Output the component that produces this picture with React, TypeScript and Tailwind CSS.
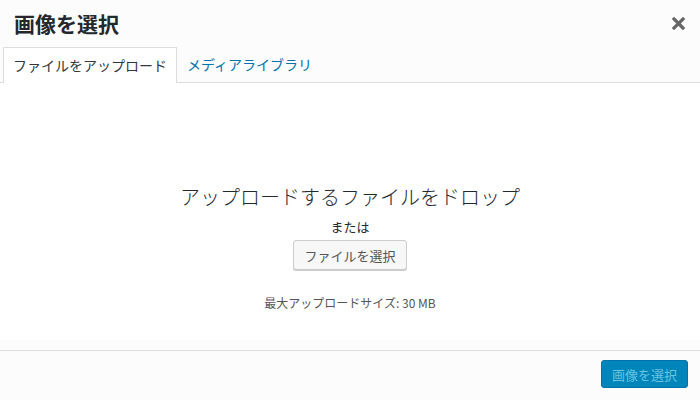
import React from "react";

export default function App() {
  const font = { fontFamily: '"Noto Sans CJK JP", "Noto Sans", sans-serif' };
  return (
    <div className="w-[700px] h-[400px] flex flex-col bg-[#fcfcfc] text-[#23282d] overflow-hidden" style={font}>
      <div className="flex flex-col bg-[#fcfcfc] border-b border-[#dddddd]">
        <div className="h-[47px] flex items-center justify-between pl-[14px] pr-[15px]">
          <h1 className="text-[21px] font-bold leading-none text-[#23282d]">画像を選択</h1>
          <svg width="13" height="13" viewBox="0 0 13 13">
            <path d="M2 2 L11 11 M11 2 L2 11" stroke="#666666" strokeWidth="3.2" strokeLinecap="square" />
          </svg>
        </div>
        <div className="flex h-[35px] pl-[3px]">
          <div className="-mb-px bg-white border border-b-0 border-[#dddddd] px-[9px] flex items-center text-[14px] text-[#32373c]">
            ファイルをアップロード
          </div>
          <div className="px-[10px] flex items-center text-[14px] text-[#0073aa]">メディアライブラリ</div>
        </div>
      </div>
      <div className="h-[257px] bg-white flex flex-col items-center">
        <div className="mt-[100px] text-[20px] leading-[28px] font-light text-[#23282d]">アップロードするファイルをドロップ</div>
        <div className="mt-[6px] text-[13px] leading-[20px] text-[#23282d]">または</div>
        <button className="mt-[3px] h-[30px] px-[10px] bg-[#f7f7f7] border border-[#cccccc] rounded-[3px] shadow-[0_1px_0_#cccccc] text-[13px] text-[#555555] leading-none">
          ファイルを選択
        </button>
        <div className="mt-[24px] text-[12px] leading-[18px] text-[#555555]">最大アップロードサイズ: 30 MB</div>
      </div>
      <div className="h-[11px] bg-[#fcfcfc] border-b border-[#dddddd]" />
      <div className="flex-1 bg-[#fcfcfc] flex items-start justify-end pr-[12px] pt-[9px]">
        <button className="h-[28px] w-[87px] bg-[#0085ba] border border-[#0073aa] rounded-[3px] text-[13px] text-[#66c6e4] leading-none">
          画像を選択
        </button>
      </div>
    </div>
  );
}
